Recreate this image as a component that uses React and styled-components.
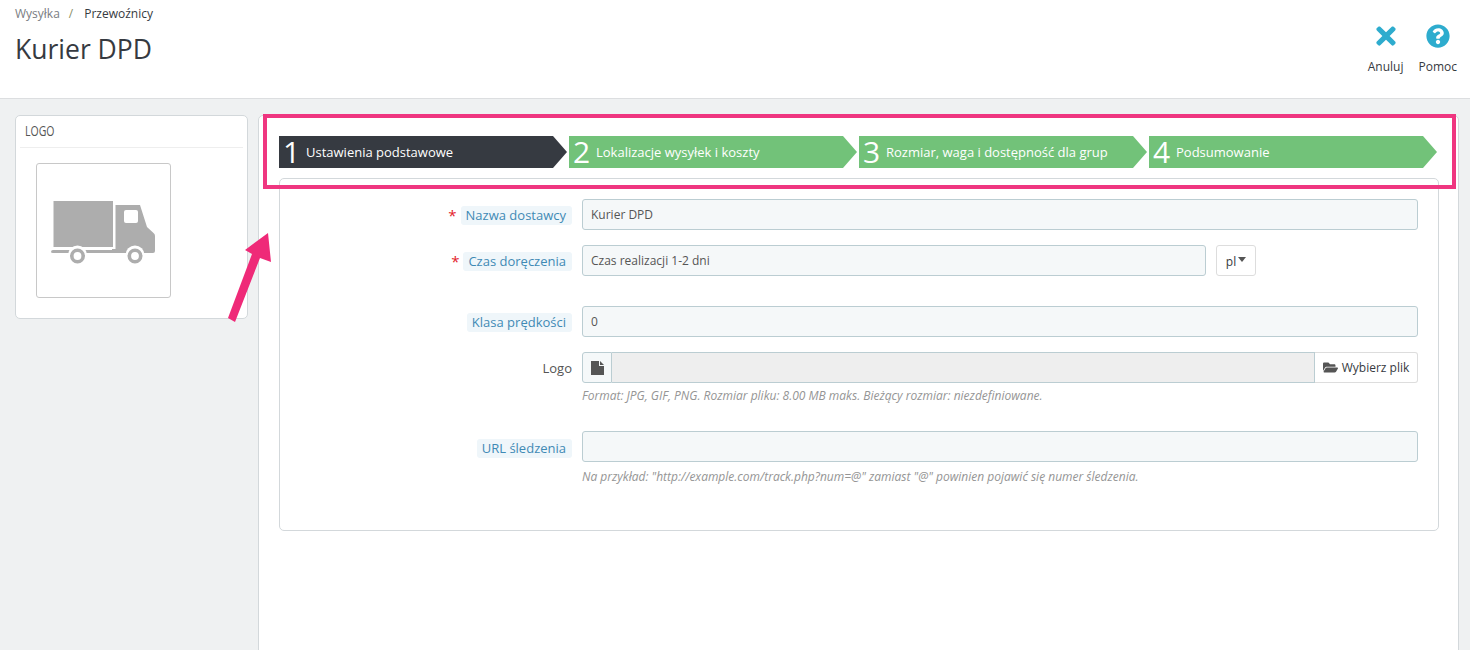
import React from 'react';
import styled, { createGlobalStyle } from 'styled-components';
import { FaTimes, FaQuestionCircle, FaFolderOpen } from 'react-icons/fa';

const GlobalStyle = createGlobalStyle`
  html, body {
    margin: 0;
    height: 100%;
    overflow: hidden;
    background: #eff1f2;
    font-family: "Open Sans", "Liberation Sans", sans-serif;
    color: #363a41;
  }
  * { box-sizing: border-box; }
`;

const Page = styled.div`
  position: relative;
  width: 1470px;
  height: 650px;
  overflow: hidden;
`;

// naglowek strony
const Header = styled.header`
  height: 99px;
  background: #fff;
  border-bottom: 1px solid #dcdee0;
  display: flex;
  justify-content: space-between;
  padding: 7px 13px 0 16px;
`;

const Breadcrumb = styled.div`
  font-size: 12px;
  line-height: 14px;
  display: flex;
  gap: 9px;
  margin-left: -1px;
  span { color: #7a7d82; }
  i { font-style: normal; color: #8a8f66; }
  b { font-weight: 400; color: #363a41; margin-left: 2px; }
`;

const Title = styled.h1`
  font-size: 26.5px;
  font-weight: 400;
  line-height: 32px;
  margin: 12px 0 0 -1px;
`;

const Toolbar = styled.div`
  display: flex;
  gap: 15px;
  padding-top: 17px;
`;

const ToolButton = styled.div`
  display: flex;
  flex-direction: column;
  align-items: center;
  font-size: 12px;
  line-height: 16px;
  color: #363a41;
  gap: 11px;
  svg { color: #2eacce; display: block; }
`;

const IconSlot = styled.div`
  height: 24px;
  display: flex;
  align-items: center;
`;

const Main = styled.main`
  display: flex;
  align-items: flex-start;
  padding: 16px 11px 0 15px;
  gap: 10px;
`;

const LogoCard = styled.aside`
  width: 233px;
  height: 204px;
  background: #fff;
  border: 1px solid #d3d8db;
  border-radius: 5px;
  padding: 0 4px;
  flex: none;
`;

const LogoTitle = styled.div`
  height: 32px;
  border-bottom: 1px solid #eeeeee;
  line-height: 29px;
  padding-left: 5px;
  color: #555;
  span {
    display: inline-block;
    font-size: 14px;
    transform: scaleX(0.75);
    transform-origin: left center;
  }
`;

const LogoBox = styled.div`
  width: 135px;
  height: 135px;
  margin: 15px 0 0 16px;
  border: 1px solid #c8c8c8;
  border-radius: 3px;
  background: #fff;
  svg { display: block; }
`;

const Content = styled.section`
  flex: none;
  width: 1201px;
  height: 560px;
  background: #fff;
  border: 1px solid #d3d8db;
  border-radius: 5px 5px 0 0;
  padding: 20px 19px 0 20px;
`;

const Steps = styled.div`
  display: flex;
  gap: 2px;
  margin-bottom: 10px;
`;

const Step = styled.div`
  width: 288px;
  height: 32px;
  display: flex;
  align-items: center;
  color: #fff;
  background: ${(p) => (p.$active ? '#363a41' : '#72c279')};
  clip-path: polygon(0 0, 274px 0, 288px 50%, 274px 100%, 0 100%);
`;

const StepNumber = styled.span`
  width: 27px;
  flex: none;
  font-size: 30px;
  font-weight: 400;
  line-height: 32px;
  padding-left: 4px;
`;

const StepLabel = styled.span`
  font-size: 13px;
  white-space: nowrap;
`;

const FormCard = styled.div`
  width: 1160px;
  height: 353px;
  border: 1px solid #d3d8db;
  border-radius: 5px;
  padding-top: 20px;
`;

const Row = styled.div`
  display: flex;
  margin-bottom: ${(p) => p.$gap ?? 15}px;
`;

const LabelCol = styled.div`
  width: 292px;
  height: 31px;
  flex: none;
  display: flex;
  justify-content: flex-end;
  align-items: center;
  gap: 4px;
  font-size: 13px;
  color: #555;
  padding-top: ${(p) => p.$drop ?? 1}px;
`;

const Required = styled.span`
  color: #e3202a;
  font-size: 15px;
  line-height: 19px;
`;

const HintLabel = styled.span`
  height: 19px;
  line-height: 18px;
  padding: 0 6px 0 5px;
  background: #eff6fa;
  border-radius: 3px;
  color: #3f8ab5;
`;

const PlainLabel = styled.span`
  color: #555;
`;

const FieldCol = styled.div`
  margin-left: 10px;
  width: 836px;
  flex: none;
`;

const FieldLine = styled.div`
  display: flex;
  gap: 10px;
`;

const TextInput = styled.input`
  width: ${(p) => p.$width || 836}px;
  height: 31px;
  padding: 0 8px;
  background: #f5f8f9;
  border: 1px solid #bbcdd2;
  border-radius: 3px;
  font-family: inherit;
  font-size: 12px;
  color: #555;
  outline: none;
`;

const LangButton = styled.div`
  width: 40px;
  height: 31px;
  padding-top: 1px;
  border: 1px solid #dddddd;
  border-radius: 3px;
  display: flex;
  align-items: center;
  justify-content: center;
  gap: 2px;
  font-size: 12px;
  color: #363a41;
`;

const Caret = styled.span`
  width: 0;
  height: 0;
  border-left: 4px solid transparent;
  border-right: 4px solid transparent;
  border-top: 5px solid #555;
  margin-top: -3px;
`;

const FileGroup = styled.div`
  display: flex;
  height: 31px;
`;

const FileAddon = styled.div`
  width: 30px;
  flex: none;
  display: flex;
  align-items: center;
  justify-content: center;
  background: #f5f8f9;
  border: 1px solid #bbcdd2;
  border-radius: 3px 0 0 3px;
`;

const FileName = styled.div`
  flex: 1;
  background: #eeeeee;
  border: 1px solid #bbcdd2;
  border-left: none;
`;

const FileButton = styled.div`
  width: 103px;
  flex: none;
  display: flex;
  align-items: center;
  justify-content: center;
  gap: 4px;
  border: 1px solid #dddddd;
  border-left: none;
  border-radius: 0 3px 3px 0;
  font-size: 12px;
  color: #363a41;
  svg { color: #555; }
`;

const Help = styled.p`
  margin: ${(p) => p.$top ?? 5}px 0 0;
  font-size: 12px;
  line-height: 16px;
  font-style: italic;
  color: #959595;
`;

// rozowe zaznaczenie na screenshocie
const Highlight = styled.div`
  position: absolute;
  left: 263px;
  top: 114px;
  width: 1193px;
  height: 75px;
  border: 4px solid #ef3680;
  pointer-events: none;
`;

const Arrow = styled.svg`
  position: absolute;
  left: 220px;
  top: 225px;
`;

const TruckIcon = () => (
  <svg width="133" height="133" viewBox="37 164 133 133">
    <rect x="53.5" y="201" width="59.5" height="46" fill="#adadad" />
    <path
      d="M115.5 205 H140 L147 227 L153.5 233 Q155 234 155 236 V251 Q155 253 153 253 H112 V249 H115.5 Z M51 252 Q51 250 53 250 H112 V253 H53 Q51 253 51 252 Z"
      fill="#adadad"
    />
    <rect x="124" y="210" width="14" height="13" rx="2" fill="#fff" />
    <circle cx="77.5" cy="255" r="9.5" fill="#fff" />
    <circle cx="135" cy="255" r="9.5" fill="#fff" />
    <circle cx="77.5" cy="256" r="5.7" fill="none" stroke="#adadad" strokeWidth="3.6" />
    <circle cx="135" cy="256" r="5.7" fill="none" stroke="#adadad" strokeWidth="3.6" />
  </svg>
);

const FileIcon = () => (
  <svg width="13" height="14" viewBox="0 0 13 14">
    <path d="M0 0 H8 V5 H13 V14 H0 Z" fill="#555" />
    <path d="M9 0 L13 4 H9 Z" fill="#555" />
  </svg>
);

const steps = [
  'Ustawienia podstawowe',
  'Lokalizacje wysyłek i koszty',
  'Rozmiar, waga i dostępność dla grup',
  'Podsumowanie',
];

const App = () => {
  return (
    <Page>
      <GlobalStyle />
      <Header>
        <div>
          <Breadcrumb>
            <span>Wysyłka</span>
            <i>/</i>
            <b>Przewoźnicy</b>
          </Breadcrumb>
          <Title>Kurier DPD</Title>
        </div>
        <Toolbar>
          <ToolButton>
            <IconSlot><FaTimes size={28} /></IconSlot>
            Anuluj
          </ToolButton>
          <ToolButton>
            <IconSlot><FaQuestionCircle size={24} /></IconSlot>
            Pomoc
          </ToolButton>
        </Toolbar>
      </Header>

      <Main>
        <LogoCard>
          <LogoTitle><span>LOGO</span></LogoTitle>
          <LogoBox>
            <TruckIcon />
          </LogoBox>
        </LogoCard>

        <Content>
          <Steps>
            {steps.map((label, i) => (
              <Step key={label} $active={i === 0}>
                <StepNumber>{i + 1}</StepNumber>
                <StepLabel>{label}</StepLabel>
              </Step>
            ))}
          </Steps>

          <FormCard>
            <Row>
              <LabelCol>
                <Required>*</Required>
                <HintLabel>Nazwa dostawcy</HintLabel>
              </LabelCol>
              <FieldCol>
                <TextInput defaultValue="Kurier DPD" />
              </FieldCol>
            </Row>
            <Row $gap={30}>
              <LabelCol $drop={2}>
                <Required>*</Required>
                <HintLabel>Czas doręczenia</HintLabel>
              </LabelCol>
              <FieldCol>
                <FieldLine>
                  <TextInput $width={624} defaultValue="Czas realizacji 1-2 dni" />
                  <LangButton>pl<Caret /></LangButton>
                </FieldLine>
              </FieldCol>
            </Row>
            <Row>
              <LabelCol>
                <HintLabel>Klasa prędkości</HintLabel>
              </LabelCol>
              <FieldCol>
                <TextInput defaultValue="0" />
              </FieldCol>
            </Row>
            <Row $gap={27}>
              <LabelCol $drop={0}>
                <PlainLabel>Logo</PlainLabel>
              </LabelCol>
              <FieldCol>
                <FileGroup>
                  <FileAddon><FileIcon /></FileAddon>
                  <FileName />
                  <FileButton><FaFolderOpen size={15} />Wybierz plik</FileButton>
                </FileGroup>
                <Help>Format: JPG, GIF, PNG. Rozmiar pliku: 8.00 MB maks. Bieżący rozmiar: niezdefiniowane.</Help>
              </FieldCol>
            </Row>
            <Row>
              <LabelCol $drop={3}>
                <HintLabel>URL śledzenia</HintLabel>
              </LabelCol>
              <FieldCol>
                <TextInput />
                <Help $top={7}>Na przykład: "http://example.com/track.php?num=@" zamiast "@" powinien pojawić się numer śledzenia.</Help>
              </FieldCol>
            </Row>
          </FormCard>
        </Content>
      </Main>

      <Highlight />
      <Arrow width="60" height="100" viewBox="220 225 60 100">
        <polygon points="268,233 271,262 260,258 235,322 228,318 252,254 245,250" fill="#ef2a78" />
      </Arrow>
    </Page>
  );
};

export default App;
